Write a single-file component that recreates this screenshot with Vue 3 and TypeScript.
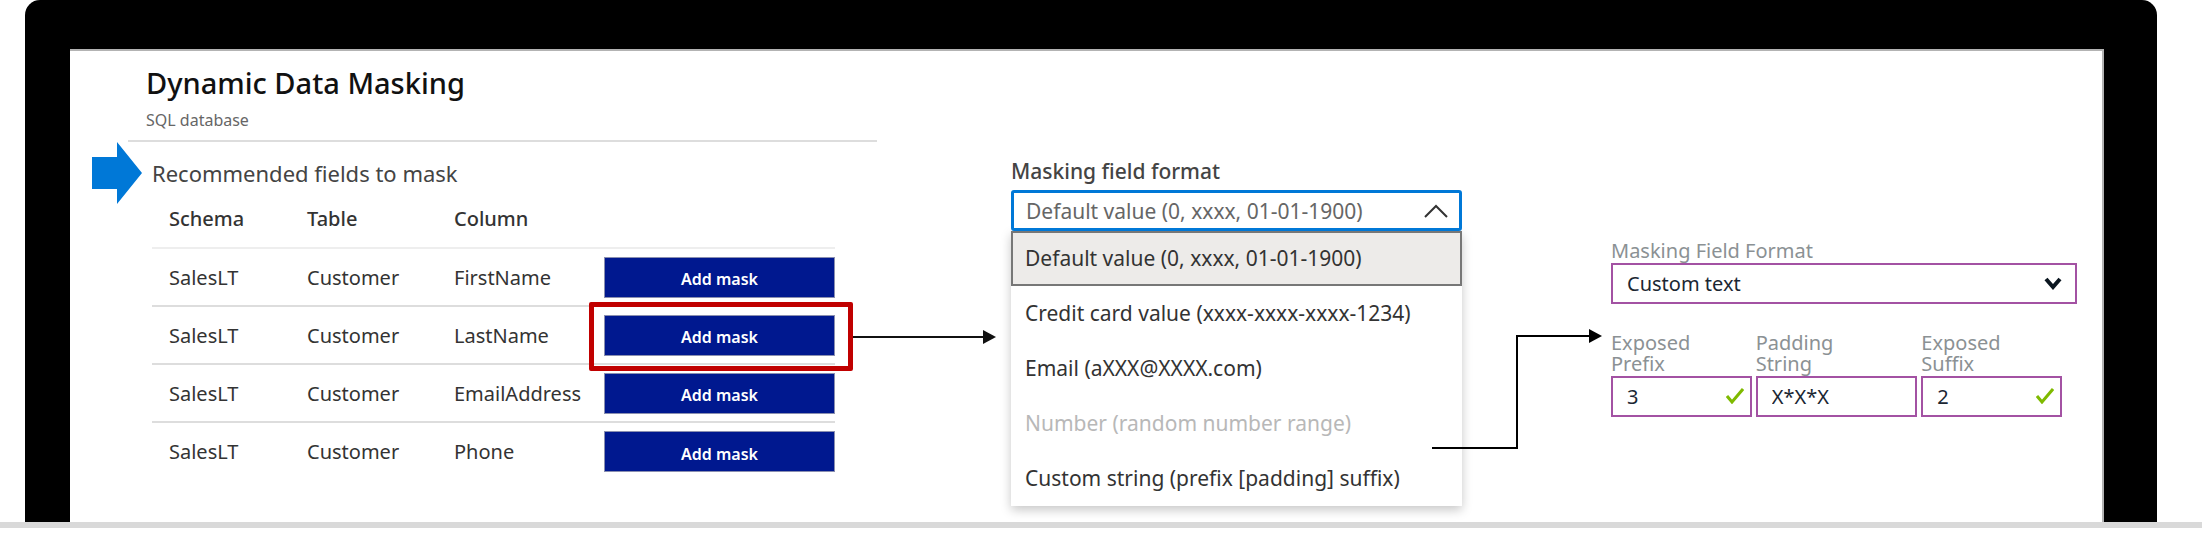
<script setup lang="ts">
import { ref } from 'vue'

interface Field {
  schema: string
  table: string
  column: string
  highlighted?: boolean
}

interface MaskFormat {
  label: string
  disabled?: boolean
}

const fields: Field[] = [
  { schema: 'SalesLT', table: 'Customer', column: 'FirstName' },
  { schema: 'SalesLT', table: 'Customer', column: 'LastName', highlighted: true },
  { schema: 'SalesLT', table: 'Customer', column: 'EmailAddress' },
  { schema: 'SalesLT', table: 'Customer', column: 'Phone' },
]

const formats: MaskFormat[] = [
  { label: 'Default value (0, xxxx, 01-01-1900)' },
  { label: 'Credit card value (xxxx-xxxx-xxxx-1234)' },
  { label: 'Email (aXXX@XXXX.com)' },
  { label: 'Number (random number range)', disabled: true },
  { label: 'Custom string (prefix [padding] suffix)' },
]

const selected = ref(formats[0].label)
const customFormat = ref('Custom text')
const prefix = ref('3')
const padding = ref('X*X*X')
const suffix = ref('2')

function pick(format: MaskFormat) {
  if (!format.disabled) selected.value = format.label
}
</script>

<template>
  <div class="laptop">
    <div class="bezel">
      <main class="screen">
        <section class="recommend">
          <header class="head">
            <h1>Dynamic Data Masking</h1>
            <p>SQL database</p>
          </header>
          <div class="lead">
            <svg class="pointer" viewBox="0 0 50 62" aria-hidden="true">
              <path d="M0 15H25V0L50 31L25 62V47H0Z" fill="#0078d7" />
            </svg>
            <h2>Recommended fields to mask</h2>
          </div>
          <table>
            <thead>
              <tr>
                <th class="c-schema">Schema</th>
                <th class="c-table">Table</th>
                <th class="c-column">Column</th>
                <th class="c-action"></th>
              </tr>
            </thead>
            <tbody>
              <tr v-for="field in fields" :key="field.column">
                <td class="c-schema">{{ field.schema }}</td>
                <td>{{ field.table }}</td>
                <td>{{ field.column }}</td>
                <td class="c-action">
                  <div class="action" :class="{ highlighted: field.highlighted }">
                    <button type="button">Add mask</button>
                  </div>
                </td>
              </tr>
            </tbody>
          </table>
        </section>

        <div class="arrow" aria-hidden="true">
          <span class="line"></span><span class="tip"></span>
        </div>

        <section class="format">
          <label for="format">Masking field format</label>
          <div class="combo">
            <select id="format" v-model="selected">
              <option v-for="f in formats" :key="f.label" :disabled="f.disabled">{{ f.label }}</option>
            </select>
            <svg class="up" viewBox="0 0 24 14" aria-hidden="true">
              <path d="M1 13L12 2L23 13" fill="none" stroke="#333" stroke-width="2" />
            </svg>
          </div>
          <ul role="listbox" aria-label="Masking field format">
            <li
              v-for="f in formats"
              :key="f.label"
              role="option"
              :aria-selected="f.label === selected"
              :aria-disabled="f.disabled"
              :class="{ current: f.label === selected, disabled: f.disabled }"
              @click="pick(f)"
            >
              {{ f.label }}
            </li>
          </ul>
        </section>

        <div class="elbow" aria-hidden="true">
          <span class="rise"></span><span class="line"></span><span class="tip"></span>
        </div>

        <section class="custom">
          <label for="custom-format">Masking Field Format</label>
          <div class="combo">
            <select id="custom-format" v-model="customFormat">
              <option>Custom text</option>
            </select>
            <svg class="down" viewBox="0 0 18 13" aria-hidden="true">
              <path d="M2 2L9 10L16 2" fill="none" stroke="#0b1620" stroke-width="4" />
            </svg>
          </div>
          <div class="parts">
            <div class="part">
              <label for="prefix">Exposed<br />Prefix</label>
              <div class="box">
                <input id="prefix" v-model="prefix" type="text" />
                <svg class="check" viewBox="0 0 18 16" aria-hidden="true">
                  <path d="M1 8L6 14L17 1" fill="none" stroke="#7fba00" stroke-width="3" />
                </svg>
              </div>
            </div>
            <div class="part">
              <label for="padding">Padding<br />String</label>
              <div class="box">
                <input id="padding" v-model="padding" type="text" />
              </div>
            </div>
            <div class="part">
              <label for="suffix">Exposed<br />Suffix</label>
              <div class="box">
                <input id="suffix" v-model="suffix" type="text" />
                <svg class="check" viewBox="0 0 18 16" aria-hidden="true">
                  <path d="M1 8L6 14L17 1" fill="none" stroke="#7fba00" stroke-width="3" />
                </svg>
              </div>
            </div>
          </div>
        </section>
      </main>
    </div>
    <div class="base"></div>
  </div>
</template>

<style>
body {
  margin: 0;
  background: #fff;
}
</style>

<style scoped>
.laptop,
.laptop * {
  box-sizing: border-box;
}

.laptop {
  font-family: 'Noto Sans', 'Open Sans', sans-serif;
  font-size: 20px;
  color: #333;
}

.bezel {
  margin: 0 48px 0 25px;
  padding: 49px 53px 0 45px;
  background: #000;
  border-radius: 15px 15px 0 0;
}

.screen {
  display: grid;
  grid-template-columns: 760fr 159fr 451fr 149fr 466fr;
  align-items: start;
  padding: 0 25px 16px 22px;
  background: #fff;
  border-top: 2px solid #b3b3b3;
  border-right: 2px solid #b3b3b3;
}

.base {
  height: 6px;
  margin-right: 3px;
  background: #d9d9d9;
}

h1,
h2,
p,
ul {
  margin: 0;
  padding: 0;
  font-weight: 400;
}

.head {
  margin: 0 -25px 0 36px;
  padding: 11px 0 8px 18px;
  border-bottom: 2px solid #ddd;
}

h1 {
  font-size: 29px;
  font-weight: 500;
  line-height: 42px;
  color: #111;
}

.head p {
  margin-top: 4px;
  font-size: 16px;
  line-height: 24px;
  color: #666;
}

.lead {
  display: flex;
  align-items: center;
  gap: 10px;
}

.pointer {
  width: 50px;
  height: 62px;
}

h2 {
  font-size: 22px;
  line-height: 32px;
  color: #444;
}

table {
  width: calc(100% - 77px);
  margin-left: 60px;
  border-collapse: collapse;
  table-layout: fixed;
}

th,
td {
  padding: 0;
  text-align: left;
  border-bottom: 2px solid #ddd;
}

th {
  height: 44px;
  font-weight: 500;
  line-height: 30px;
  vertical-align: top;
  border-bottom-color: #eee;
}

td {
  height: 58px;
  vertical-align: middle;
}

tbody tr:last-child td {
  border-bottom: 0;
}

.c-schema {
  width: 155px;
  padding-left: 17px;
}

.c-table {
  width: 147px;
}

.c-action {
  width: 231px;
}

.action {
  position: relative;
}

.action button {
  display: block;
  width: 100%;
  height: 41px;
  padding: 4px 0 0;
  border: 1px solid #8a8fb0;
  background: #00188f;
  color: #fff;
  font: 600 16px/24px 'Noto Sans', 'Open Sans', sans-serif;
}

.highlighted::after {
  content: '';
  position: absolute;
  inset: -13px -18px -15px -15px;
  border: 5px solid #c00000;
  border-radius: 2px;
  pointer-events: none;
}

.arrow {
  display: flex;
  align-items: center;
  margin: 279px 15px 0 0;
}

.line {
  flex: 1;
  height: 2px;
  background: #111;
}

.tip {
  border: solid transparent;
  border-width: 7px 0 7px 13px;
  border-left-color: #111;
}

.format > label {
  display: block;
  margin-top: 105px;
  font-size: 21px;
  font-weight: 500;
  line-height: 30px;
  color: #444;
}

.format > .combo {
  margin-top: 4px;
}

.combo,
.box {
  position: relative;
}

select,
input {
  display: block;
  width: 100%;
  height: 41px;
  margin: 0;
  appearance: none;
  background: #fff;
  font: 20px/28px 'Noto Sans', 'Open Sans', sans-serif;
}

.format select {
  padding: 0 12px;
  border: 3px solid #0078d7;
  border-radius: 3px;
  font-size: 21px;
  color: #666;
}

.up,
.down,
.check {
  position: absolute;
  pointer-events: none;
}

.up {
  top: 14px;
  right: 14px;
  width: 24px;
  height: 14px;
}

ul {
  list-style: none;
  font-size: 21px;
  background: #fff;
  box-shadow: 0 4px 10px rgba(0, 0, 0, 0.22);
}

li {
  padding: 0 12px;
  border: 2px solid transparent;
  line-height: 51px;
  white-space: nowrap;
}

li.current {
  background: #edebe9;
  border-color: #777;
}

li.disabled {
  color: #b8b8b8;
}

.elbow {
  display: flex;
  align-items: flex-start;
  margin: 278px 9px 0 -30px;
}

.rise {
  width: 86px;
  height: 114px;
  margin-top: 6px;
  border: solid #000;
  border-width: 0 2px 2px 0;
}

.elbow .line {
  margin-top: 6px;
  background: #000;
}

.elbow .tip {
  border-left-color: #000;
}

.custom label {
  display: block;
  line-height: 21px;
  color: #8b9194;
}

.custom > label {
  margin-top: 189px;
}

.custom select,
.custom input {
  padding: 0 14px;
  border: 2px solid #a352a3;
  border-radius: 0;
  color: #1b2733;
}

.custom > .combo {
  margin-top: 2px;
}

.down {
  top: 14px;
  right: 15px;
  width: 18px;
  height: 13px;
}

.parts {
  display: grid;
  grid-template-columns: 141fr 162fr 141fr;
  gap: 4px;
  margin: 28px 15px 0 0;
}

.box {
  margin-top: 2px;
}

.check {
  top: 12px;
  right: 8px;
  width: 18px;
  height: 16px;
}
</style>
